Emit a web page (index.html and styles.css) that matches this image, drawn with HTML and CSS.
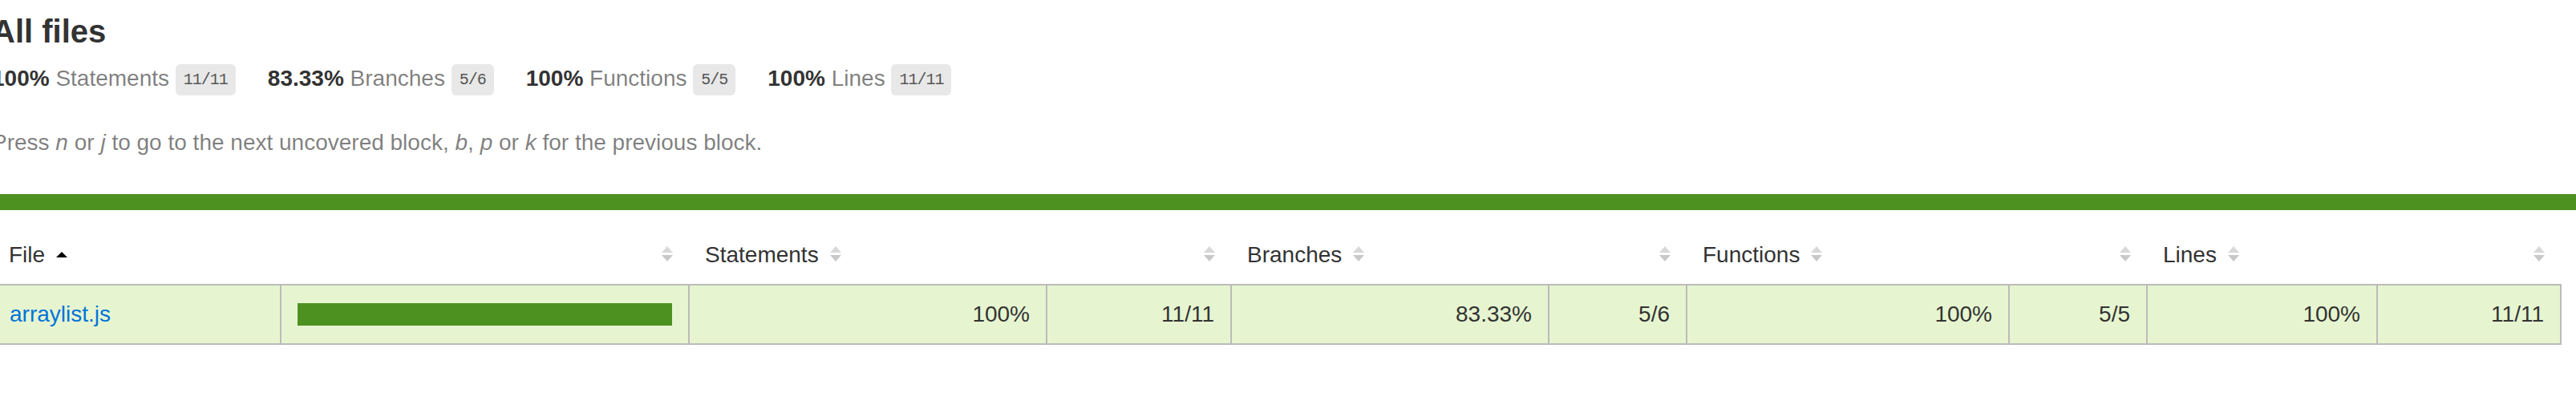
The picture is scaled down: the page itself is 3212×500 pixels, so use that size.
FILE: index.html
```html
<!DOCTYPE html>
<html lang="en">
<head>
<meta charset="utf-8">
<title>Code coverage report for All files</title>
<link rel="stylesheet" href="styles.css">
</head>
<body>
<div class="wrapper">
  <div class="pad1 top">
    <h1>All files</h1>
    <div class="summary">
      <div class="stat"><span class="strong">100% </span><span class="quiet">Statements</span> <span class="fraction">11/11</span></div>
      <div class="stat"><span class="strong">83.33% </span><span class="quiet">Branches</span> <span class="fraction">5/6</span></div>
      <div class="stat"><span class="strong">100% </span><span class="quiet">Functions</span> <span class="fraction">5/5</span></div>
      <div class="stat"><span class="strong">100% </span><span class="quiet">Lines</span> <span class="fraction">11/11</span></div>
    </div>
    <p class="quiet">Press <em>n</em> or <em>j</em> to go to the next uncovered block, <em>b</em>, <em>p</em> or <em>k</em> for the previous block.</p>
  </div>
  <div class="status-line high"></div>
  <div class="pad1">
    <table class="coverage-summary">
      <colgroup>
        <col class="w-file"><col class="w-pic">
        <col class="w-spct"><col class="w-sabs">
        <col class="w-bpct"><col class="w-babs">
        <col class="w-fpct"><col class="w-fabs">
        <col class="w-lpct"><col class="w-labs">
      </colgroup>
      <thead>
        <tr>
          <th class="file sorted">File<svg class="sorter" viewBox="0 0 14 20"><path d="M7 7 L14 14 L0 14 Z" fill="#000"/></svg></th>
          <th class="pic"><svg class="sorter" viewBox="0 0 14 20"><path d="M7 0 L14 8 L0 8 Z" fill="#d8d8d8"/><path d="M0 11 L14 11 L7 19 Z" fill="#c8c8c8"/></svg></th>
          <th class="pct">Statements<svg class="sorter" viewBox="0 0 14 20"><path d="M7 0 L14 8 L0 8 Z" fill="#d8d8d8"/><path d="M0 11 L14 11 L7 19 Z" fill="#c8c8c8"/></svg></th>
          <th class="abs"><svg class="sorter" viewBox="0 0 14 20"><path d="M7 0 L14 8 L0 8 Z" fill="#d8d8d8"/><path d="M0 11 L14 11 L7 19 Z" fill="#c8c8c8"/></svg></th>
          <th class="pct">Branches<svg class="sorter" viewBox="0 0 14 20"><path d="M7 0 L14 8 L0 8 Z" fill="#d8d8d8"/><path d="M0 11 L14 11 L7 19 Z" fill="#c8c8c8"/></svg></th>
          <th class="abs"><svg class="sorter" viewBox="0 0 14 20"><path d="M7 0 L14 8 L0 8 Z" fill="#d8d8d8"/><path d="M0 11 L14 11 L7 19 Z" fill="#c8c8c8"/></svg></th>
          <th class="pct">Functions<svg class="sorter" viewBox="0 0 14 20"><path d="M7 0 L14 8 L0 8 Z" fill="#d8d8d8"/><path d="M0 11 L14 11 L7 19 Z" fill="#c8c8c8"/></svg></th>
          <th class="abs"><svg class="sorter" viewBox="0 0 14 20"><path d="M7 0 L14 8 L0 8 Z" fill="#d8d8d8"/><path d="M0 11 L14 11 L7 19 Z" fill="#c8c8c8"/></svg></th>
          <th class="pct">Lines<svg class="sorter" viewBox="0 0 14 20"><path d="M7 0 L14 8 L0 8 Z" fill="#d8d8d8"/><path d="M0 11 L14 11 L7 19 Z" fill="#c8c8c8"/></svg></th>
          <th class="abs"><svg class="sorter" viewBox="0 0 14 20"><path d="M7 0 L14 8 L0 8 Z" fill="#d8d8d8"/><path d="M0 11 L14 11 L7 19 Z" fill="#c8c8c8"/></svg></th>
        </tr>
      </thead>
      <tbody>
        <tr>
          <td class="file high"><a href="#">arraylist.js</a></td>
          <td class="pic high"><div class="chart"><div class="cover-fill cover-full" style="width: 100%"></div><div class="cover-empty" style="width: 0%"></div></div></td>
          <td class="pct high">100%</td>
          <td class="abs high">11/11</td>
          <td class="pct high">83.33%</td>
          <td class="abs high">5/6</td>
          <td class="pct high">100%</td>
          <td class="abs high">5/5</td>
          <td class="pct high">100%</td>
          <td class="abs high">11/11</td>
        </tr>
      </tbody>
    </table>
  </div>
</div>
</body>
</html>
```

FILE: styles.css
```css
*, *::before, *::after { box-sizing: border-box; }
html, body { margin: 0; padding: 0; }
body {
  font-family: "Liberation Sans", Arial, Helvetica, sans-serif;
  font-size: 28px;
  color: #333;
  background: #fff;
}
a { color: #0074D9; text-decoration: none; }
.wrapper { margin-left: -30px; }
.pad1 { padding: 20px; }
.pad1.top { padding-top: 17px; }
h1 { font-size: 40px; margin: 0; font-weight: bold; }
.summary { display: flex; }
.stat { padding: 20px 40px 20px 0; white-space: nowrap; }
.strong { font-weight: bold; }
.quiet { color: rgba(0, 0, 0, 0.5); }
.fraction {
  font-family: "Liberation Mono", Consolas, monospace;
  font-size: 20px;
  letter-spacing: -1px;
  color: #555;
  background: #E8E8E8;
  padding: 8px 10px;
  border-radius: 6px;
  vertical-align: middle;
}
p { margin: 28px 0; }
.status-line { height: 20px; }
.status-line.high { background: rgb(77, 146, 33); }

.coverage-summary {
  border-collapse: collapse;
  width: 100%;
  table-layout: fixed;
}
.w-file { width: 359px; }
.w-pic { width: 509px; }
.w-spct { width: 446px; }
.w-sabs { width: 230px; }
.w-bpct { width: 396px; }
.w-babs { width: 172px; }
.w-fpct { width: 402px; }
.w-fabs { width: 172px; }
.w-lpct { width: 287px; }
.w-labs { width: 229px; }
.coverage-summary tr { border-bottom: 2px solid #bbb; }
.coverage-summary tbody { border: 2px solid #bbb; }
.coverage-summary td, .coverage-summary th { padding: 20px; }
.coverage-summary td { border-right: 2px solid #bbb; }
.coverage-summary td:last-child { border-right: none; }
.coverage-summary th {
  text-align: left;
  font-weight: normal;
  white-space: nowrap;
}
.coverage-summary th.pic,
.coverage-summary th.abs,
.coverage-summary td.pct,
.coverage-summary td.abs { text-align: right; }
.coverage-summary td.file { white-space: nowrap; }
.sorter {
  display: inline-block;
  width: 14px;
  height: 20px;
  margin-left: 14px;
}
.high { background: rgb(230, 245, 208); }
.chart {
  line-height: 0;
  border: 2px solid rgb(77, 146, 33);
}
.cover-fill, .cover-empty {
  display: inline-block;
  height: 24px;
}
.cover-fill { background: rgb(77, 146, 33); }
.cover-empty { background: #fff; }
```
